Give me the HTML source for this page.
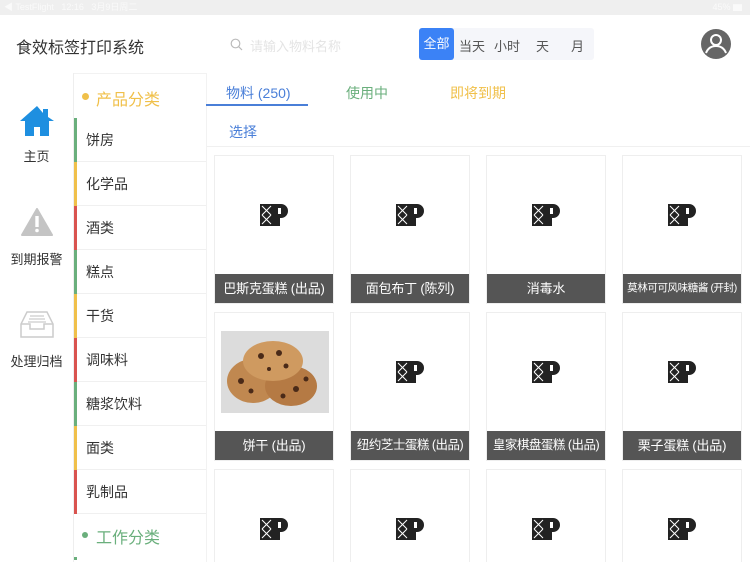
<!DOCTYPE html>
<html><head><meta charset="utf-8"><style>
*{margin:0;padding:0;box-sizing:border-box}
html,body{width:750px;height:562px;overflow:hidden}
body{background:#fff;font-family:"Liberation Sans","Noto Sans CJK SC",sans-serif;position:relative;color:#333}
.abs{position:absolute}
.status{left:0;top:0;width:750px;height:15px;background:#efefef;color:#fafafa;font-size:9px;line-height:15px}
.cat{left:74px;width:132px;height:44px;border-bottom:1px solid #f0f0f0;font-size:14px;line-height:44px;padding-left:12px;color:#333}
.cat i{position:absolute;left:0;top:0;width:3px;height:44px}
.card{width:120px;height:149px;border:1px solid #eee;background:#fff}
.card .lb{position:absolute;left:0;right:0;bottom:0;height:29px;background:#555;color:#fff;font-size:13px;line-height:29px;text-align:center;white-space:nowrap;overflow:hidden;letter-spacing:-0.2px}
.card svg{position:absolute;left:45px;top:48px}
.nav{width:73px;text-align:center;font-size:13px;color:#333}
.short{height:93px;border-bottom:none}
</style></head><body>
<div class="abs status"><span style="margin-left:4px">◀ TestFlight &nbsp; 12:16 &nbsp; 3月9日周二</span><span style="position:absolute;right:8px">45% ▆</span></div>
<div class="abs" style="left:16px;top:34px;font-size:16px;color:#333">食效标签打印系统</div>
<svg class="abs" style="left:230px;top:38px" width="13" height="13" viewBox="0 0 13 13"><circle cx="5.5" cy="5.5" r="4.3" fill="none" stroke="#bbb" stroke-width="1.2"/><path d="M8.7 8.7L12 12" stroke="#bbb" stroke-width="1.2"/></svg>
<div class="abs" style="left:250px;top:36px;font-size:13px;color:#e4e4e4">请输入物料名称</div>
<div class="abs" style="left:419px;top:28px;width:175px;height:32px;background:#f5f6fa;border-radius:3px"></div>
<div class="abs" style="left:419px;top:28px;width:35px;height:32px;background:#3b82f6;border-radius:3px;color:#fff;font-size:13px;line-height:32px;text-align:center">全部</div>
<div class="abs" style="left:459px;top:36px;font-size:13px;color:#555">当天</div>
<div class="abs" style="left:494px;top:36px;font-size:13px;color:#555">小时</div>
<div class="abs" style="left:536px;top:36px;font-size:13px;color:#555">天</div>
<div class="abs" style="left:571px;top:36px;font-size:13px;color:#555">月</div>
<svg class="abs" style="left:701px;top:29px" width="30" height="30" viewBox="0 0 30 30"><circle cx="15" cy="15" r="15" fill="#666"/><circle cx="15" cy="11" r="6" fill="#fff"/><circle cx="15" cy="11" r="4" fill="#666"/><path d="M5 24c2-5 6-7 10-7s8 2 10 7" fill="none" stroke="#fff" stroke-width="2"/></svg>

<svg class="abs" style="left:18px;top:104px" width="38" height="33" viewBox="0 0 38 33"><path d="M19 2L2 17h5v15h9v-9h6v9h9V17h5L30 13V5h-5v4z" fill="#1e8fe0"/></svg>
<div class="abs nav" style="left:0;top:146px">主页</div>
<svg class="abs" style="left:21px;top:208px" width="32" height="28" viewBox="0 0 32 28"><path d="M16 1L31 27H1z" fill="#c4c4c4" stroke="#c4c4c4" stroke-linejoin="round" stroke-width="2"/><rect x="14.3" y="8" width="3.4" height="11" fill="#fff"/><circle cx="16" cy="22.5" r="1.8" fill="#fff"/></svg>
<div class="abs nav" style="left:0;top:249px">到期报警</div>
<svg class="abs" style="left:20px;top:311px" width="34" height="28" viewBox="0 0 34 28"><path d="M7 1h20l6 12v13H1V13z" fill="none" stroke="#ccc" stroke-width="1.5"/><path d="M1 13h9v5h14v-5h9" fill="none" stroke="#ccc" stroke-width="1.5"/><path d="M10 5h14M9 8h16M8 11h18" stroke="#ccc" stroke-width="1.2"/></svg>
<div class="abs nav" style="left:0;top:351px">处理归档</div>

<div class="abs" style="left:73px;top:73px;width:1px;height:489px;background:#eee"></div>
<div class="abs" style="left:206px;top:73px;width:1px;height:489px;background:#f2f2f2"></div>
<div class="abs" style="left:74px;top:73px;width:132px;height:1px;background:#f2f2f2"></div>
<div class="abs" style="left:82px;top:93px;width:7px;height:7px;border-radius:50%;background:#f0c04a"></div>
<div class="abs" style="left:96px;top:86px;font-size:16px;color:#f0c04a">产品分类</div>
<div class="abs cat" style="top:118px"><i style="background:#6aaf7c"></i>饼房</div>
<div class="abs cat" style="top:162px"><i style="background:#f0c04a"></i>化学品</div>
<div class="abs cat" style="top:206px"><i style="background:#d9534f"></i>酒类</div>
<div class="abs cat" style="top:250px"><i style="background:#6aaf7c"></i>糕点</div>
<div class="abs cat" style="top:294px"><i style="background:#f0c04a"></i>干货</div>
<div class="abs cat" style="top:338px"><i style="background:#d9534f"></i>调味料</div>
<div class="abs cat" style="top:382px"><i style="background:#6aaf7c"></i>糖浆饮料</div>
<div class="abs cat" style="top:426px"><i style="background:#f0c04a"></i>面类</div>
<div class="abs cat" style="top:470px"><i style="background:#d9534f"></i>乳制品</div>
<div class="abs" style="left:82px;top:532px;width:6px;height:6px;border-radius:50%;background:#6aaf7c"></div>
<div class="abs" style="left:96px;top:524px;font-size:16px;color:#6aaf7c">工作分类</div>
<div class="abs" style="left:74px;top:557px;width:3px;height:3px;background:#6aaf7c"></div>

<div class="abs" style="left:226px;top:83px;font-size:14px;color:#4a7fd8">物料 (250)</div>
<div class="abs" style="left:206px;top:104px;width:102px;height:2px;background:#4a7fd8"></div>
<div class="abs" style="left:346px;top:83px;font-size:14px;color:#6aaf7c">使用中</div>
<div class="abs" style="left:450px;top:83px;font-size:14px;color:#f0c04a">即将到期</div>
<div class="abs" style="left:229px;top:122px;font-size:14px;color:#4a7fd8">选择</div>
<div class="abs" style="left:207px;top:146px;width:543px;height:1px;background:#f0f0f0"></div>

<svg width="0" height="0" style="position:absolute"><defs><g id="lg"><rect x="0" y="0" width="13" height="22" fill="#222"/><path d="M2 2l4.5 4.5L11 2M2 11l4.5-4.5L11 11M2 11l4.5 4.5L11 11M2 20l4.5-4.5L11 20" fill="none" stroke="#fff" stroke-width="1"/><path d="M13 0h8a7 7 0 0 1 0 14h-1v8h-7z" fill="#222"/><rect x="18" y="4" width="3" height="6" fill="#fff"/></g></defs></svg>

<div class="abs card" style="left:214px;top:155px"><svg width="30" height="22"><use href="#lg"/></svg><div class="lb">巴斯克蛋糕 (出品)</div></div>
<div class="abs card" style="left:350px;top:155px"><svg width="30" height="22"><use href="#lg"/></svg><div class="lb">面包布丁 (陈列)</div></div>
<div class="abs card" style="left:486px;top:155px"><svg width="30" height="22"><use href="#lg"/></svg><div class="lb">消毒水</div></div>
<div class="abs card" style="left:622px;top:155px"><svg width="30" height="22"><use href="#lg"/></svg><div class="lb" style="font-size:10.5px;letter-spacing:-0.4px">莫林可可风味糖酱 (开封)</div></div>

<div class="abs card" style="left:214px;top:312px">
<div style="position:absolute;left:6px;top:18px;width:108px;height:82px;background:#dcdcdc"></div>
<svg style="position:absolute;left:6px;top:18px" width="108" height="82"><ellipse cx="32" cy="50" rx="26" ry="22" fill="#c08850"/><ellipse cx="70" cy="55" rx="26" ry="20" fill="#b57a44"/><ellipse cx="52" cy="30" rx="30" ry="20" fill="#cf9a60"/><g fill="#4a2a18"><circle cx="40" cy="25" r="3"/><circle cx="58" cy="22" r="3"/><circle cx="65" cy="35" r="2.5"/><circle cx="20" cy="50" r="3"/><circle cx="30" cy="60" r="2.5"/><circle cx="75" cy="58" r="3"/><circle cx="85" cy="48" r="2.5"/><circle cx="48" cy="38" r="2"/><circle cx="62" cy="65" r="2.5"/></g></svg>
<div class="lb">饼干 (出品)</div></div>
<div class="abs card" style="left:350px;top:312px"><svg width="30" height="22"><use href="#lg"/></svg><div class="lb" style="font-size:12.5px;letter-spacing:-0.5px">纽约芝士蛋糕 (出品)</div></div>
<div class="abs card" style="left:486px;top:312px"><svg width="30" height="22"><use href="#lg"/></svg><div class="lb" style="font-size:12.5px;letter-spacing:-0.5px">皇家棋盘蛋糕 (出品)</div></div>
<div class="abs card" style="left:622px;top:312px"><svg width="30" height="22"><use href="#lg"/></svg><div class="lb">栗子蛋糕 (出品)</div></div>

<div class="abs card short" style="left:214px;top:469px"><svg width="30" height="22"><use href="#lg"/></svg></div>
<div class="abs card short" style="left:350px;top:469px"><svg width="30" height="22"><use href="#lg"/></svg></div>
<div class="abs card short" style="left:486px;top:469px"><svg width="30" height="22"><use href="#lg"/></svg></div>
<div class="abs card short" style="left:622px;top:469px"><svg width="30" height="22"><use href="#lg"/></svg></div>
</body></html>
